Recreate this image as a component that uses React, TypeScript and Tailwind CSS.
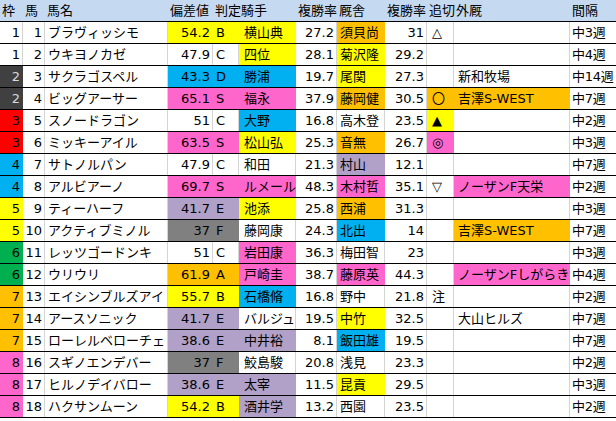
import React from "react";

// column widths in px, left to right
const WIDTH = [
  "w-[23px]", "w-[22px]", "w-[123px]", "w-[45px]", "w-[26px]", "w-[57px]",
  "w-[41px]", "w-[48px]", "w-[42px]", "w-[27px]", "w-[116px]", "w-[43px]",
];

const FILL: Record<string, string> = {
  w: "bg-white border-[#d4d4d4]",
  y: "bg-[#ffff00] border-[#ffff00]",
  b: "bg-[#00b0f0] border-[#00b0f0]",
  p: "bg-[#ff66cc] border-[#ff66cc]",
  o: "bg-[#ffc000] border-[#ffc000]",
  v: "bg-[#b1a0c7] border-[#b1a0c7]",
  g: "bg-[#808080] border-[#808080]",
};

const WAKU: Record<number, string> = {
  1: "bg-white border-[#d4d4d4] text-black",
  2: "bg-[#404040] border-[#404040] text-[#d9d9d9]",
  3: "bg-[#ff0000] border-[#ff0000] text-black",
  4: "bg-[#00b0f0] border-[#00b0f0] text-black",
  5: "bg-[#ffff00] border-[#ffff00] text-black",
  6: "bg-[#00b050] border-[#00b050] text-black",
  7: "bg-[#ffc000] border-[#ffc000] text-black",
  8: "bg-[#ff66cc] border-[#ff66cc] text-black",
};

type Row = {
  waku: number; no: number; name: string;
  score: string; grade: string; sc: string;
  jockey: string; jc: string; jr: string;
  trainer: string; tc: string; tr: string;
  mark: string; mc: string;
  farm: string; fc: string;
  interval: string;
};

const rows: Row[] = [
  { waku: 1, no: 1, name: "ブラヴィッシモ", score: "54.2", grade: "B", sc: "y", jockey: "横山典", jc: "y", jr: "27.2", trainer: "須貝尚", tc: "o", tr: "31", mark: "△", mc: "w", farm: "", fc: "w", interval: "中3週" },
  { waku: 1, no: 2, name: "ウキヨノカゼ", score: "47.9", grade: "C", sc: "w", jockey: "四位", jc: "y", jr: "28.1", trainer: "菊沢隆", tc: "y", tr: "29.2", mark: "", mc: "w", farm: "", fc: "w", interval: "中4週" },
  { waku: 2, no: 3, name: "サクラゴスペル", score: "43.3", grade: "D", sc: "b", jockey: "勝浦", jc: "b", jr: "19.7", trainer: "尾関", tc: "y", tr: "27.3", mark: "", mc: "w", farm: "新和牧場", fc: "w", interval: "中14週" },
  { waku: 2, no: 4, name: "ビッグアーサー", score: "65.1", grade: "S", sc: "p", jockey: "福永", jc: "p", jr: "37.9", trainer: "藤岡健", tc: "o", tr: "30.5", mark: "〇", mc: "o", farm: "吉澤S-WEST", fc: "o", interval: "中7週" },
  { waku: 3, no: 5, name: "スノードラゴン", score: "51", grade: "C", sc: "w", jockey: "大野", jc: "b", jr: "16.8", trainer: "高木登", tc: "w", tr: "23.5", mark: "▲", mc: "y", farm: "", fc: "w", interval: "中2週" },
  { waku: 3, no: 6, name: "ミッキーアイル", score: "63.5", grade: "S", sc: "p", jockey: "松山弘", jc: "y", jr: "25.3", trainer: "音無", tc: "o", tr: "26.7", mark: "◎", mc: "p", farm: "", fc: "w", interval: "中3週" },
  { waku: 4, no: 7, name: "サトノルパン", score: "47.9", grade: "C", sc: "w", jockey: "和田", jc: "w", jr: "21.3", trainer: "村山", tc: "v", tr: "12.1", mark: "", mc: "w", farm: "", fc: "w", interval: "中7週" },
  { waku: 4, no: 8, name: "アルビアーノ", score: "69.7", grade: "S", sc: "p", jockey: "ルメール", jc: "p", jr: "48.3", trainer: "木村哲", tc: "p", tr: "35.1", mark: "▽", mc: "w", farm: "ノーザンF天栄", fc: "p", interval: "中2週" },
  { waku: 5, no: 9, name: "ティーハーフ", score: "41.7", grade: "E", sc: "v", jockey: "池添", jc: "y", jr: "25.8", trainer: "西浦", tc: "o", tr: "31.3", mark: "", mc: "w", farm: "", fc: "w", interval: "中3週" },
  { waku: 5, no: 10, name: "アクティブミノル", score: "37", grade: "F", sc: "g", jockey: "藤岡康", jc: "w", jr: "24.3", trainer: "北出", tc: "b", tr: "14", mark: "", mc: "w", farm: "吉澤S-WEST", fc: "o", interval: "中7週" },
  { waku: 6, no: 11, name: "レッツゴードンキ", score: "51", grade: "C", sc: "w", jockey: "岩田康", jc: "p", jr: "36.3", trainer: "梅田智", tc: "w", tr: "23", mark: "", mc: "w", farm: "", fc: "w", interval: "中3週" },
  { waku: 6, no: 12, name: "ウリウリ", score: "61.9", grade: "A", sc: "o", jockey: "戸崎圭", jc: "p", jr: "38.7", trainer: "藤原英", tc: "p", tr: "44.3", mark: "", mc: "w", farm: "ノーザンFしがらき", fc: "p", interval: "中4週" },
  { waku: 7, no: 13, name: "エイシンブルズアイ", score: "55.7", grade: "B", sc: "y", jockey: "石橋脩", jc: "b", jr: "16.8", trainer: "野中", tc: "w", tr: "21.8", mark: "注", mc: "w", farm: "", fc: "w", interval: "中2週" },
  { waku: 7, no: 14, name: "アースソニック", score: "41.7", grade: "E", sc: "v", jockey: "バルジュ", jc: "w", jr: "19.5", trainer: "中竹", tc: "y", tr: "32.5", mark: "", mc: "w", farm: "大山ヒルズ", fc: "w", interval: "中7週" },
  { waku: 7, no: 15, name: "ローレルベローチェ", score: "38.6", grade: "E", sc: "v", jockey: "中井裕", jc: "v", jr: "8.1", trainer: "飯田雄", tc: "b", tr: "19.5", mark: "", mc: "w", farm: "", fc: "w", interval: "中7週" },
  { waku: 8, no: 16, name: "スギノエンデバー", score: "37", grade: "F", sc: "g", jockey: "鮫島駿", jc: "w", jr: "20.8", trainer: "浅見", tc: "w", tr: "23.3", mark: "", mc: "w", farm: "", fc: "w", interval: "中2週" },
  { waku: 8, no: 17, name: "ヒルノデイバロー", score: "38.6", grade: "E", sc: "v", jockey: "太宰", jc: "v", jr: "11.5", trainer: "昆貢", tc: "y", tr: "29.5", mark: "", mc: "w", farm: "", fc: "w", interval: "中3週" },
  { waku: 8, no: 18, name: "ハクサンムーン", score: "54.2", grade: "B", sc: "y", jockey: "酒井学", jc: "v", jr: "13.2", trainer: "西園", tc: "w", tr: "23.5", mark: "", mc: "w", farm: "", fc: "w", interval: "中2週" },
];

const HEADERS = ["枠", "馬", "馬名", "偏差値", "判定", "騎手", "複勝率", "厩舎", "複勝率", "追切", "外厩", "間隔"];

function Cell({ i, fill, right, children }: { i: number; fill: string; right?: boolean; children?: React.ReactNode }) {
  return (
    <div
      className={`${WIDTH[i]} h-full shrink-0 border-r flex items-center whitespace-nowrap ${fill} ${
        right ? "justify-end pr-[2px]" : "justify-start pl-[3px]"
      }`}
    >
      {children}
    </div>
  );
}

export default function App() {
  return (
    <div className="w-[616px] h-[421px] bg-white overflow-hidden text-[13px] leading-none text-black font-['DejaVu_Sans','Noto_Sans_CJK_JP',sans-serif]">
      {/* HEADER */}
      <div className="flex h-[22px] border-b border-black bg-[#c5d9f1]">
        {HEADERS.map((h, i) => (
          <div key={i} className={`${WIDTH[i]} h-full shrink-0 flex items-center pl-[2px] whitespace-nowrap`}>
            {h}
          </div>
        ))}
        <div className="flex-1" />
      </div>

      {/* ROWS */}
      {rows.map((r) => (
        <div key={r.no} className="flex h-[22px] border-b border-black">
          <Cell i={0} fill={WAKU[r.waku]} right>{r.waku}</Cell>
          <Cell i={1} fill={FILL.w} right>{r.no}</Cell>
          <Cell i={2} fill={FILL.w}>{r.name}</Cell>
          <Cell i={3} fill={FILL[r.sc]} right>{r.score}</Cell>
          <Cell i={4} fill={FILL[r.sc]}>{r.grade}</Cell>
          <Cell i={5} fill={FILL[r.jc]}><span className="pl-[2px]">{r.jockey}</span></Cell>
          <Cell i={6} fill={FILL.w} right>{r.jr}</Cell>
          <Cell i={7} fill={FILL[r.tc]}>{r.trainer}</Cell>
          <Cell i={8} fill={FILL.w} right>{r.tr}</Cell>
          <Cell i={9} fill={FILL[r.mc]}><span className="pl-[2px]">{r.mark}</span></Cell>
          <Cell i={10} fill={FILL[r.fc]}><span className="pl-[1px]">{r.farm}</span></Cell>
          <div className="w-[46px] h-full shrink-0 flex items-center pl-[2px] whitespace-nowrap tracking-[-0.3px]">
            {r.interval}
          </div>
        </div>
      ))}
    </div>
  );
}
